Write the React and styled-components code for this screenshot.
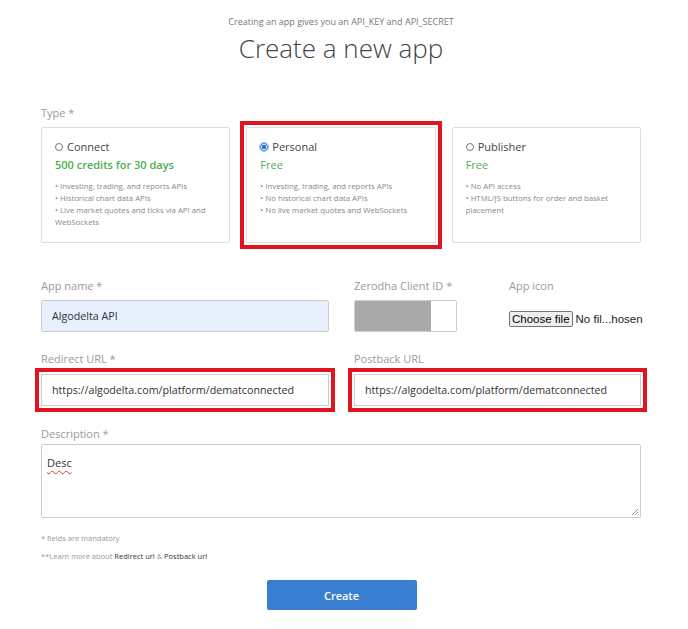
import styled, { createGlobalStyle } from "styled-components";

const GlobalStyle = createGlobalStyle`
  body {
    margin: 0;
    background: #fff;
    font-family: "Open Sans", "Liberation Sans", sans-serif;
    color: #444;
  }
`;

const Page = styled.div`
  width: 600px;
  margin-left: 41px;
  padding-top: 16px;
`;

const Header = styled.div`
  text-align: center;
`;
const Sub = styled.div`
  font-size: 9px;
  line-height: 12px;
  color: #777;
`;
const Title = styled.h1`
  margin: 4px 0 0;
  font-size: 26px;
  line-height: 32px;
  font-weight: 300;
  color: #444;
`;

const Label = styled.div`
  font-size: 11px;
  line-height: 16px;
  color: #9b9b9b;
  margin-bottom: ${({ gap }) => gap ?? 6}px;
`;

const Section = styled.div`
  margin-top: ${({ top }) => top}px;
`;

const Cards = styled.div`
  display: grid;
  grid-template-columns: repeat(3, 1fr);
  gap: 16px;
`;
const Card = styled.label`
  height: 116px;
  box-sizing: border-box;
  border: 1px solid #ddd;
  border-radius: ${({ marked }) => (marked ? 0 : 2)}px;
  padding: 12px 13px;
  outline: ${({ marked }) => (marked ? "4px solid #e0141e" : "none")};
  outline-offset: 2px;
  cursor: pointer;
`;
const RadioRow = styled.div`
  display: flex;
  align-items: center;
  gap: 4px;
  font-size: 11px;
  line-height: 14px;
  color: #444;
`;
const Radio = styled.input`
  appearance: none;
  margin: 0;
  width: 8px;
  height: 8px;
  border-radius: 50%;
  border: 1px solid #777;
  background: #fff;
  &:checked {
    border-color: #2a78d2;
    background: radial-gradient(circle, #2a78d2 0 2px, #fff 2.5px 3px);
    box-shadow: 0 0 0 1px #9cc3ee;
  }
`;
const Price = styled.div`
  margin-top: 3px;
  font-size: 11px;
  line-height: 16px;
  font-weight: ${({ bold }) => (bold ? 600 : 400)};
  color: #4caf50;
`;
const Points = styled.ul`
  margin: 7px 0 0;
  padding: 0;
  list-style: none;
  font-size: 7.8px;
  line-height: 12px;
  color: #888;
  li::before {
    content: "• ";
  }
`;

const Row = styled.div`
  display: grid;
  grid-template-columns: 288px 1fr;
  gap: 25px;
`;
const Split = styled.div`
  display: grid;
  grid-template-columns: 131px 1fr;
  gap: 24px;
`;

const Input = styled.input`
  display: block;
  width: 100%;
  height: 32px;
  box-sizing: border-box;
  border: 1px solid #ccc;
  border-radius: ${({ marked }) => (marked ? 0 : 2)}px;
  padding: 0 10px;
  font-family: "Open Sans", "Liberation Sans", sans-serif;
  font-size: 10.7px;
  color: #333;
  background: ${({ filled }) => (filled ? "#e8f0fe" : "#fff")};
  outline: ${({ marked }) => (marked ? "4px solid #e0141e" : "none")};
  outline-offset: 2px;
`;

const ClientBox = styled.div`
  width: 103px;
  height: 32px;
  box-sizing: border-box;
  border: 1px solid #ccc;
  border-radius: 2px;
  display: flex;
  overflow: hidden;
`;
const Blur = styled.div`
  width: 76px;
  background: #a9a9aa;
`;

const FileWrap = styled.div`
  padding-top: 17px;
  white-space: nowrap;
  display: flex;
  align-items: center;
`;
const FileBtn = styled.span`
  font-family: "Liberation Sans", Arial, sans-serif;
  font-size: 11.5px;
  line-height: 14px;
  padding: 0 2px;
  border: 1px solid #767676;
  border-radius: 2px;
  background: #efefef;
  color: #000;
`;
const FileName = styled.span`
  font-family: "Liberation Sans", Arial, sans-serif;
  font-size: 11.5px;
  color: #222;
  margin-left: 3px;
`;

const TextBox = styled.div`
  position: relative;
  height: 74px;
  box-sizing: border-box;
  border: 1px solid #ccc;
  border-radius: 2px;
  padding: 10px 5px;
  font-size: 11px;
  color: #333;
`;
const Typo = styled.span`
  text-decoration: underline wavy #d33;
  text-decoration-thickness: 1px;
  text-underline-offset: 3px;
`;
const Grip = styled.svg`
  position: absolute;
  right: 1px;
  bottom: 1px;
`;

const Notes = styled.div`
  margin-top: 14px;
  font-size: 7.5px;
  line-height: 12px;
  color: #999;
  p {
    margin: 0 0 6px;
  }
  b {
    font-weight: 400;
    color: #333;
  }
`;

const Actions = styled.div`
  display: flex;
  justify-content: center;
  margin-top: 18px;
`;
const Button = styled.button`
  width: 150px;
  height: 30px;
  border: none;
  border-radius: 2px;
  background: #387ed1;
  color: #fff;
  font-family: "Open Sans", "Liberation Sans", sans-serif;
  font-size: 11px;
  font-weight: 600;
  margin-left: 1px;
`;

const plans = [
  {
    id: "connect",
    name: "Connect",
    price: "500 credits for 30 days",
    bold: true,
    points: [
      "Investing, trading, and reports APIs",
      "Historical chart data APIs",
      "Live market quotes and ticks via API and WebSockets",
    ],
  },
  {
    id: "personal",
    name: "Personal",
    price: "Free",
    checked: true,
    points: [
      "Investing, trading, and reports APIs",
      "No historical chart data APIs",
      "No live market quotes and WebSockets",
    ],
  },
  {
    id: "publisher",
    name: "Publisher",
    price: "Free",
    points: ["No API access", "HTML/JS buttons for order and basket placement"],
  },
];

export default function App() {
  return (
    <>
      <GlobalStyle />
      <Page>
        <Header>
          <Sub>Creating an app gives you an API_KEY and API_SECRET</Sub>
          <Title>Create a new app</Title>
        </Header>

        <Section top={41}>
          <Label>Type *</Label>
          <Cards>
            {plans.map((p) => (
              <Card key={p.id} marked={p.checked}>
                <RadioRow>
                  <Radio type="radio" name="type" defaultChecked={p.checked} />
                  {p.name}
                </RadioRow>
                <Price bold={p.bold}>{p.price}</Price>
                <Points>
                  {p.points.map((t) => (
                    <li key={t}>{t}</li>
                  ))}
                </Points>
              </Card>
            ))}
          </Cards>
        </Section>

        <Section top={35}>
          <Row>
            <div>
              <Label>App name *</Label>
              <Input filled defaultValue="Algodelta API" />
            </div>
            <Split>
              <div>
                <Label>Zerodha Client ID *</Label>
                <ClientBox>
                  <Blur />
                </ClientBox>
              </div>
              <div>
                <Label gap={0}>App icon</Label>
                <FileWrap>
                  <FileBtn>Choose file</FileBtn>
                  <FileName>No fil...hosen</FileName>
                </FileWrap>
              </div>
            </Split>
          </Row>
        </Section>

        <Section top={19}>
          <Row>
            <div>
              <Label gap={7}>Redirect URL *</Label>
              <Input marked defaultValue="https://algodelta.com/platform/dematconnected" />
            </div>
            <div>
              <Label gap={7}>Postback URL</Label>
              <Input marked defaultValue="https://algodelta.com/platform/dematconnected" />
            </div>
          </Row>
        </Section>

        <Section top={20}>
          <Label gap={2}>Description *</Label>
          <TextBox>
            <Typo>Desc</Typo>
            <Grip width="8" height="8" viewBox="0 0 8 8">
              <path d="M7 1L1 7M7 4L4 7" stroke="#999" strokeWidth="1" />
            </Grip>
          </TextBox>
        </Section>

        <Notes>
          <p>* fields are mandatory</p>
          <p>
            **Learn more about <b>Redirect url</b> &amp; <b>Postback url</b>
          </p>
        </Notes>

        <Actions>
          <Button>Create</Button>
        </Actions>
      </Page>
    </>
  );
}
